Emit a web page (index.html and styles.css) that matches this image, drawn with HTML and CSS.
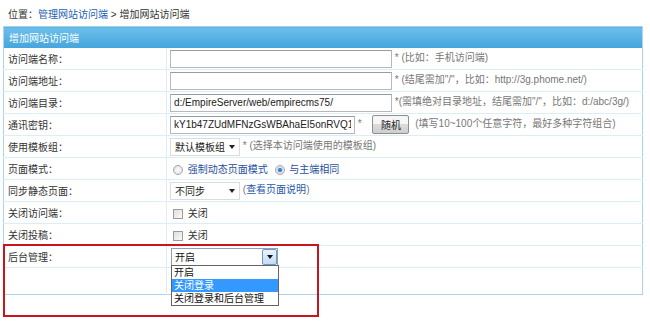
FILE: index.html
```html
<!DOCTYPE html>
<html lang="zh-CN">
<head>
    <meta charset="UTF-8">
    <title>增加网站访问端</title>
    <link rel="stylesheet" href="styles.css">
</head>
<body>
    <div class="place">位置：<a href="#">管理网站访问端</a> &gt; 增加网站访问端</div>
    <table class="form">
        <tr class="head"><td colspan="2">增加网站访问端</td></tr>
        <tr>
            <td class="label">访问端名称：</td>
            <td><input class="txt" type="text"> <span class="hint">* (比如：手机访问端)</span></td>
        </tr>
        <tr>
            <td class="label">访问端地址：</td>
            <td><input class="txt" type="text"> <span class="hint">* (结尾需加"/"，比如：http://3g.phome.net/)</span></td>
        </tr>
        <tr>
            <td class="label">访问端目录：</td>
            <td><input class="txt" type="text" value="d:/EmpireServer/web/empirecms75/"> <span class="hint">*(需填绝对目录地址，结尾需加"/"，比如：d:/abc/3g/)</span></td>
        </tr>
        <tr>
            <td class="label">通讯密钥：</td>
            <td><input class="txt key" type="text" value="kY1b47ZUdMFNzGsWBAhaEI5onRVQ1lR5HBg8l87Tq2xW"> <span class="hint">*</span> <button class="btn">随机</button> <span class="hint">(填写10~100个任意字符，最好多种字符组合)</span></td>
        </tr>
        <tr>
            <td class="label">使用模板组：</td>
            <td><span class="sel"><span class="val">默认模板组</span><span class="arr"></span></span> <span class="hint">* (选择本访问端使用的模板组)</span></td>
        </tr>
        <tr>
            <td class="label">页面模式：</td>
            <td><span class="radio"></span> <a href="#">强制动态页面模式</a> <span class="radio on"></span> <a href="#">与主端相同</a></td>
        </tr>
        <tr>
            <td class="label">同步静态页面：</td>
            <td><span class="sel"><span class="val">不同步</span><span class="arr"></span></span> <span class="hint">(<a href="#">查看页面说明</a>)</span></td>
        </tr>
        <tr>
            <td class="label">关闭访问端：</td>
            <td><span class="check"></span> 关闭</td>
        </tr>
        <tr>
            <td class="label">关闭投稿：</td>
            <td><span class="check"></span> 关闭</td>
        </tr>
        <tr>
            <td class="label">后台管理：</td>
            <td>
                <span class="combo">
                    <span class="combo-val">开启</span><span class="combo-btn"></span>
                    <span class="drop">
                        <span class="opt">开启</span>
                        <span class="opt hover">关闭登录</span>
                        <span class="opt">关闭登录和后台管理</span>
                    </span>
                </span>
            </td>
        </tr>
        <tr class="foot"><td class="label"></td><td></td></tr>
    </table>
    <div class="mark"></div>
</body>
</html>
```

FILE: styles.css
```css
body {
    margin: 0;
    min-height: 330px;
    position: relative;
    font-family: "Liberation Sans", "Noto Sans CJK SC", sans-serif;
    font-size: 10px;
    color: #333;
    background-color: #fff;
}
a {
    color: #1f4f9e;
    text-decoration: none;
}
.place {
    padding: 8px 0 0 8px;
    line-height: 14px;
}
.place a {
    color: #1a5fb4;
}
.form {
    width: 640px;
    margin: 4px 0 0 3px;
    border-collapse: collapse;
    border: 1px solid #a9d5ee;
}
.form td {
    height: 21px;
    padding: 0 3px;
    border-bottom: 1px solid #dcedf6;
    white-space: nowrap;
}
.form td.label {
    width: 155px;
    padding-left: 4px;
    border-right: 1px solid #dcedf6;
}
.form .head td {
    height: 21px;
    padding-left: 5px;
    color: #fff;
    background: linear-gradient(#6cbfea, #44a5dc);
    border-bottom: 0;
}
.form .foot td {
    height: 26px;
    border-bottom: 0;
}
.hint {
    color: #777;
}
.hint a {
    color: #2857a8;
}
.txt {
    box-sizing: border-box;
    width: 222px;
    height: 18px;
    padding: 0 3px;
    margin: 0;
    border: 1px solid #b5b8c0;
    border-top-color: #9a9ca3;
    font: inherit;
    color: #222;
    vertical-align: middle;
}
.txt.key {
    width: 185px;
}
.btn {
    box-sizing: border-box;
    height: 19px;
    width: 37px;
    margin: 0 3px 0 8px;
    padding: 0;
    font: inherit;
    color: #222;
    border: 1px solid #8e8f8f;
    border-radius: 2px;
    background: linear-gradient(#f6f6f6 45%, #dcdcdc 50%, #cfcfcf);
    vertical-align: middle;
}
.sel {
    box-sizing: border-box;
    display: inline-flex;
    align-items: center;
    width: 70px;
    height: 18px;
    padding: 0 4px;
    border: 1px solid #dcdcdc;
    background-color: #fff;
    color: #222;
    vertical-align: middle;
}
.val {
    flex-grow: 1;
}
.arr {
    width: 0;
    height: 0;
    border-left: 3px solid transparent;
    border-right: 3px solid transparent;
    border-top: 4px solid #222;
}
.radio {
    display: inline-block;
    box-sizing: border-box;
    width: 10px;
    height: 10px;
    margin: 0 2px 0 3px;
    border: 1px solid #a5a5a5;
    border-radius: 50%;
    background: radial-gradient(#fdfdfd, #dedede);
    vertical-align: middle;
}
.radio.on {
    margin-left: 4px;
    background: radial-gradient(#2f6fc3 0, #4b8fd6 30%, #cfd8e4 45%, #eee 70%);
}
.check {
    display: inline-block;
    box-sizing: border-box;
    width: 10px;
    height: 10px;
    margin: 0 2px 0 3px;
    border: 1px solid #9c9c9c;
    background: linear-gradient(135deg, #dedede, #fafafa);
    vertical-align: middle;
}
.combo {
    position: relative;
    box-sizing: border-box;
    display: inline-flex;
    align-items: center;
    width: 107px;
    height: 18px;
    margin-left: 1px;
    border: 1px solid #8e9fb8;
    background-color: #fff;
    color: #111;
    vertical-align: middle;
}
.combo-val {
    flex-grow: 1;
    padding-left: 3px;
}
.combo-btn {
    box-sizing: border-box;
    display: flex;
    align-items: center;
    justify-content: center;
    width: 15px;
    height: 16px;
    border: 1px solid #6f98c6;
    border-radius: 2px;
    background: linear-gradient(#eaf3fc, #c3dcf4);
}
.combo-btn::after {
    content: "";
    border-left: 3px solid transparent;
    border-right: 3px solid transparent;
    border-top: 4px solid #111;
}
.drop {
    position: absolute;
    left: -1px;
    top: 16px;
    box-sizing: border-box;
    width: 108px;
    display: flex;
    flex-direction: column;
    border: 1px solid #646464;
    background-color: #fff;
    z-index: 2;
}
.opt {
    height: 13px;
    line-height: 13px;
    padding-left: 2px;
    color: #111;
}
.opt.hover {
    color: #fff;
    background-color: #3399ff;
}
.mark {
    position: absolute;
    left: 3px;
    top: 244px;
    width: 312px;
    height: 69px;
    border: 2px solid #c8141c;
    z-index: 3;
    pointer-events: none;
}
```
